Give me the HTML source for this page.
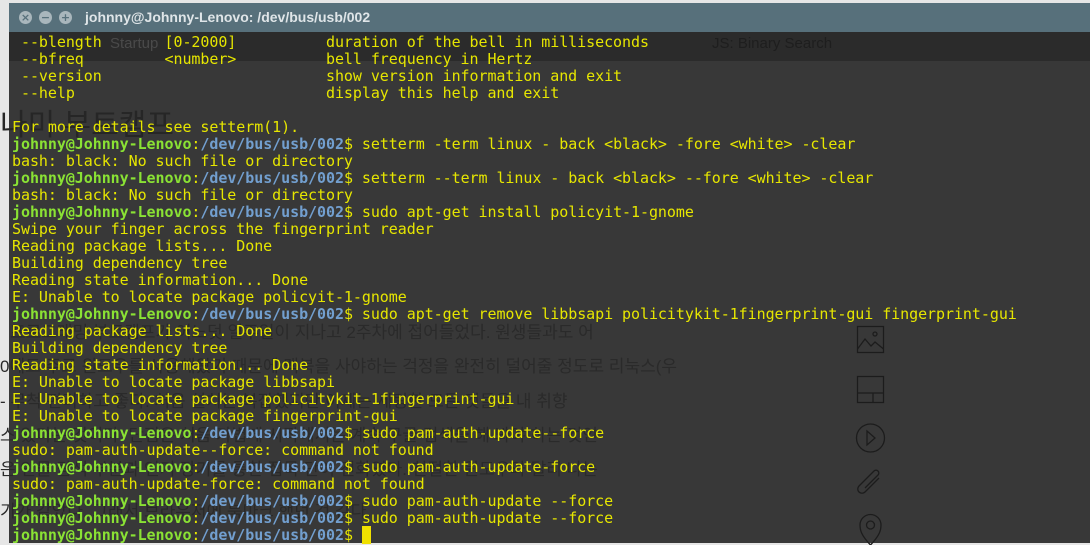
<!DOCTYPE html><html><head><meta charset="utf-8"><style>
body{margin:0;width:1090px;height:543px;overflow:hidden;background:#e6e6e6;position:relative;font-family:"DejaVu Sans Mono",monospace}
#tb{position:absolute;left:9px;top:3px;width:1081px;height:29px;background:#57707b;color:#dfe5e8;font:bold 14px "Liberation Sans","DejaVu Sans",sans-serif}
#tb .t{position:absolute;left:76px;top:6px}
.b{position:absolute;top:8px;width:13px;height:13px;border-radius:50%;background:#a9b6bc;color:#57707b;font:bold 11px/13px "DejaVu Sans";text-align:center}
#term{position:absolute;left:9px;top:32px;width:1081px;height:511px;background:#383838}
#bm{position:absolute;left:9px;top:32px;width:1081px;height:29px;background:#2b2b2b}
.bg{position:absolute;color:#2a2a2a;font:17px "Liberation Sans","Noto Sans CJK KR",sans-serif;white-space:nowrap}
pre{position:absolute;left:12px;top:34px;margin:0;font:15px/17px "DejaVu Sans Mono",monospace;color:#e6e600;letter-spacing:-0.06px}
.g{color:#8ae234;font-weight:bold}.u{color:#729fcf;font-weight:bold}
.cur{background:#f0e000;color:#f0e000}
svg{position:absolute;left:855px;top:325px}
</style></head><body>
<div id="tb"><div class="b" style="left:10px">×</div><div class="b" style="left:30px">−</div><div class="b" style="left:50px">+</div><span class="t">johnny@Johnny-Lenovo: /dev/bus/usb/002</span></div>
<div id="term"></div><div id="bm"></div>
<div class="bg" style="left:110px;top:35px;font-size:15px;color:#4a4a4a">Startup</div>
<div class="bg" style="left:712px;top:35px;font-size:15px;color:#1e1e1e">JS: Binary Search</div>
<div class="bg" style="left:0;top:100px;font-size:30px;color:#262626">나미 부트캠프</div>
<div class="bg" style="left:10px;top:318px">프로그래밍 부트캠프가 어느덧 일주일이 지나고 2주차에 접어들었다. 원생들과도 어</div>
<div class="bg" style="left:0;top:352px">0에도 주로 윈도우를 사용해왔기 때문에 맥북을 사야하는 걱정을 완전히 덜어줄 정도로 리눅스(우</div>
<div class="bg" style="left:0;top:387px">- 무척 편리하고 좋다. 처음 설치는 복잡했지만 이제는 세팅한 모든 것들을 내 취향</div>
<div class="bg" style="left:0;top:421px">스 있다는 것이다. 단점은 처음 가볍게 시작해서는 계속 구글 검색을 해 봐야 하는 것인</div>
<div class="bg" style="left:0;top:455px">은 인물 탐색 부분과 인기 장기를 통한 접목 단어 진화였다. 친절한 윈도우와 달리 나는</div>
<div class="bg" style="left:0;top:497px">기가 같았다. 그래서 브라우저에 북마크 했던 것 같다.</div>
<pre> --blength       [0-2000]          duration of the bell in milliseconds
 --bfreq         &lt;number&gt;          bell frequency in Hertz
 --version                         show version information and exit
 --help                            display this help and exit

For more details see setterm(1).
<span class="g">johnny@Johnny-Lenovo</span>:<span class="u">/dev/bus/usb/002</span>$ setterm -term linux - back &lt;black&gt; -fore &lt;white&gt; -clear
bash: black: No such file or directory
<span class="g">johnny@Johnny-Lenovo</span>:<span class="u">/dev/bus/usb/002</span>$ setterm --term linux - back &lt;black&gt; --fore &lt;white&gt; -clear
bash: black: No such file or directory
<span class="g">johnny@Johnny-Lenovo</span>:<span class="u">/dev/bus/usb/002</span>$ sudo apt-get install policyit-1-gnome
Swipe your finger across the fingerprint reader
Reading package lists... Done
Building dependency tree
Reading state information... Done
E: Unable to locate package policyit-1-gnome
<span class="g">johnny@Johnny-Lenovo</span>:<span class="u">/dev/bus/usb/002</span>$ sudo apt-get remove libbsapi policitykit-1fingerprint-gui fingerprint-gui
Reading package lists... Done
Building dependency tree
Reading state information... Done
E: Unable to locate package libbsapi
E: Unable to locate package policitykit-1fingerprint-gui
E: Unable to locate package fingerprint-gui
<span class="g">johnny@Johnny-Lenovo</span>:<span class="u">/dev/bus/usb/002</span>$ sudo pam-auth-update--force
sudo: pam-auth-update--force: command not found
<span class="g">johnny@Johnny-Lenovo</span>:<span class="u">/dev/bus/usb/002</span>$ sudo pam-auth-update-force
sudo: pam-auth-update-force: command not found
<span class="g">johnny@Johnny-Lenovo</span>:<span class="u">/dev/bus/usb/002</span>$ sudo pam-auth-update --force
<span class="g">johnny@Johnny-Lenovo</span>:<span class="u">/dev/bus/usb/002</span>$ sudo pam-auth-update --force
<span class="g">johnny@Johnny-Lenovo</span>:<span class="u">/dev/bus/usb/002</span>$ <span class="cur">_</span></pre>
<svg width="34" height="220" fill="none" stroke="#1c1c1c" stroke-width="1.3">
<rect x="2.5" y="1.5" width="26" height="26"/><circle cx="20" cy="9" r="2"/><path d="M2.5 24 L10 14 L16 21 L20 17 L28.5 24"/>
<rect x="2.5" y="51.5" width="26" height="26"/><path d="M2.5 68 H28.5 M18 68 V77.5"/>
<circle cx="15.5" cy="113" r="14"/><path d="M12 106 L20 113 L12 120 Z"/>
<path d="M24 153 L10 167 a4 4 0 0 1 -6 -6 L19 146 a2.5 2.5 0 0 1 4 4 L10 163"/>
<path d="M15.5 220 C6 210 5 205 5 200 a10.5 10.5 0 0 1 21 0 C26 205 25 210 15.5 220Z"/><circle cx="15.5" cy="200" r="4"/>
</svg>
</body></html>
